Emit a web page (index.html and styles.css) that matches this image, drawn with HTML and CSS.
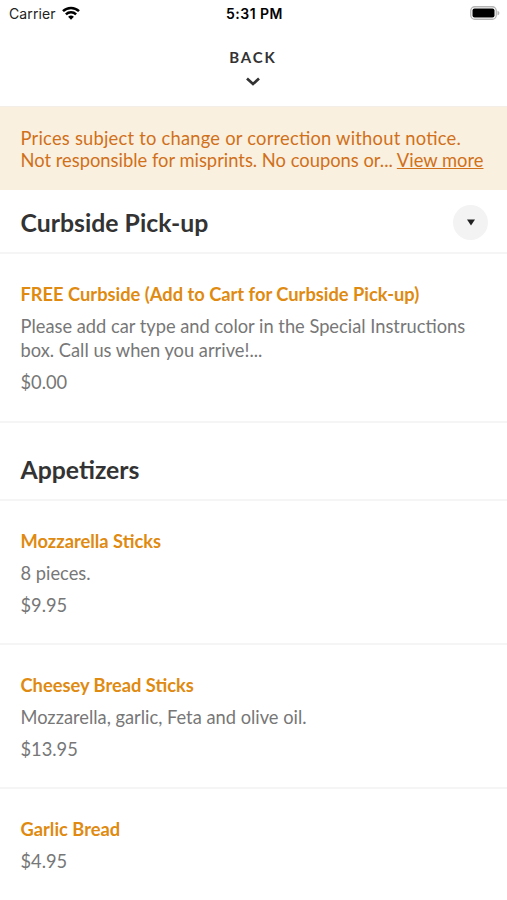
FILE: index.html
```
<!DOCTYPE html>
<html lang="en">
<head>
    <meta charset="UTF-8">
    <meta name="viewport" content="width=device-width, initial-scale=1.0">
    <title>Menu</title>
    <link rel="stylesheet" href="styles.css">
</head>
<body>
    <div class="status-bar">
        <div class="carrier">
            <span>Carrier</span>
            <svg class="wifi" width="18" height="14" viewBox="0 0 18 14">
                <path d="M1 5.2a11.4 11.4 0 0 1 16 0M3.9 8.3a7.3 7.3 0 0 1 10.2 0" fill="none" stroke="#000" stroke-width="2.5"/>
                <path d="M9 13.7l-2.9-2.9a4.2 4.2 0 0 1 5.8 0z"/>
            </svg>
        </div>
        <div class="time">5:31 PM</div>
        <svg class="battery" width="30" height="14" viewBox="0 0 30 14">
            <rect x="0.75" y="0.75" width="25.5" height="12.5" rx="4" fill="none" stroke="#b5b5b5" stroke-width="1.3"/>
            <rect x="2.5" y="2.5" width="22" height="9" rx="2"/>
            <path d="M27.5 4.7c2.5.8 2.5 3.8 0 4.6z" fill="#b5b5b5"/>
        </svg>
    </div>
    <header class="back">
        <span>BACK</span>
        <svg width="14" height="10" viewBox="0 0 14 10">
            <path d="M1 1.5l6 5.5 6-5.5" fill="none" stroke="#333" stroke-width="2.7"/>
        </svg>
    </header>
    <div class="notice">
        <p class="lead">Prices subject to change or correction without notice.</p>
        <p>Not responsible for misprints. No coupons or... <a href="#">View more</a></p>
    </div>
    <section>
        <div class="category first">
            <h2>Curbside Pick-up</h2>
            <button class="toggle" aria-label="Categories">
                <svg width="10" height="7" viewBox="0 0 10 7"><path d="M1 .5h8L5 6.5z" fill="#222"/></svg>
            </button>
        </div>
        <div class="item curbside">
            <h3>FREE Curbside (Add to Cart for Curbside Pick-up)</h3>
            <p class="description">Please add car type and color in the Special Instructions<br>box. Call us when you arrive!...</p>
            <p class="price">$0.00</p>
        </div>
    </section>
    <section>
        <div class="category">
            <h2>Appetizers</h2>
        </div>
        <div class="item">
            <h3>Mozzarella Sticks</h3>
            <p class="description">8 pieces.</p>
            <p class="price">$9.95</p>
        </div>
        <div class="item">
            <h3>Cheesey Bread Sticks</h3>
            <p class="description">Mozzarella, garlic, Feta and olive oil.</p>
            <p class="price">$13.95</p>
        </div>
        <div class="item">
            <h3>Garlic Bread</h3>
            <p class="price">$4.95</p>
        </div>
    </section>
</body>
</html>
```
FILE: styles.css
```
* {
    box-sizing: border-box;
}
body {
    font-family: Lato, sans-serif;
    background: #fff;
    color: #333;
    margin: 0;
    height: 900px;
    overflow: hidden;
}
h2, h3, p {
    margin: 0;
}
.status-bar {
    display: grid;
    grid-template-columns: 1fr auto 1fr;
    align-items: center;
    height: 26px;
    padding: 0 7px 0 9px;
    font-family: Inter, sans-serif;
    font-size: 14px;
    color: #222;
}
.carrier {
    display: flex;
    align-items: center;
    gap: 6px;
    letter-spacing: 0.1px;
}
.time {
    font-weight: 600;
    letter-spacing: 0.5px;
    color: #000;
}
.battery {
    justify-self: end;
}
.back {
    display: flex;
    flex-direction: column;
    align-items: center;
    height: 80px;
    padding: 21px 1px 0 0;
    gap: 10px;
    font-size: 15px;
    line-height: 20px;
    font-weight: bold;
    letter-spacing: 1.9px;
}
.notice {
    height: 84px;
    padding: 20px 20px 20px 20.5px;
    background: #faf0e0;
    border-top: 1px solid #f3efe8;
    color: #d0701a;
    font-size: 18.35px;
    line-height: 22px;
    white-space: nowrap;
}
.notice .lead {
    letter-spacing: 0.22px;
    font-feature-settings: "liga";
}
.notice a {
    color: inherit;
}
.category {
    display: flex;
    align-items: center;
    justify-content: space-between;
    height: 78px;
    padding: 17px 19px 0 20.5px;
    border-bottom: 2px solid #f5f5f5;
}
.category.first {
    height: 64px;
    padding-top: 3px;
}
h2 {
    font-size: 24.8px;
    line-height: 30px;
}
.toggle {
    display: flex;
    align-items: center;
    justify-content: center;
    width: 35px;
    height: 35px;
    padding: 0;
    border: none;
    border-radius: 50%;
    background: #f3f3f3;
}
.item {
    height: 144px;
    padding: 28px 20px 0 20.5px;
    border-bottom: 2px solid #f5f5f5;
    font-size: 18.3px;
    line-height: 24px;
    color: #777;
}
.item.curbside {
    height: 169px;
}
h3 {
    margin-bottom: 8px;
    font-size: 18.3px;
    line-height: 24px;
    color: #df8a10;
}
.description {
    margin-bottom: 8px;
    white-space: nowrap;
}
```
